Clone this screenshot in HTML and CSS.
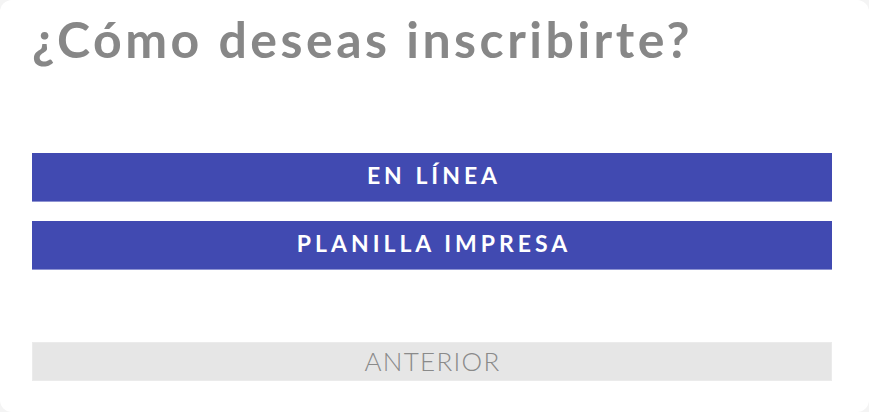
FILE: index.html
```html
<!DOCTYPE html>
<html lang="es">
<head>
<meta charset="utf-8">
<link rel="stylesheet" href="styles.css">
</head>
<body>
<div class="card">
  <h1 class="title">¿Cómo deseas inscribirte?</h1>
  <div class="options">
    <button class="btn primary">EN LÍNEA</button>
    <button class="btn primary">PLANILLA IMPRESA</button>
  </div>
  <button class="btn back">ANTERIOR</button>
</div>
</body>
</html>
```
FILE: styles.css
```css
html, body {
  margin: 0;
  padding: 0;
  background: #f4f4f4;
}
body {
  font-family: Lato, "Open Sans", sans-serif;
}
.card {
  box-sizing: border-box;
  width: 869px;
  height: 412px;
  background: #ffffff;
  border-radius: 12px;
  padding: 7px 37px 0 32px;
  display: flex;
  flex-direction: column;
}
.title {
  margin: 0;
  font-size: 50px;
  line-height: 64px;
  font-weight: 700;
  color: #878787;
  letter-spacing: 3.5px;
}
.options {
  margin-top: 82px;
  display: flex;
  flex-direction: column;
  gap: 19px;
}
.btn {
  display: block;
  width: 800px;
  border: none;
  padding: 0;
  margin: 0;
  font-family: Lato, "Open Sans", sans-serif;
  cursor: pointer;
}
.primary {
  height: 49px;
  background: #414ab1;
  color: #ffffff;
  font-size: 23px;
  font-weight: 700;
  letter-spacing: 4px;
  padding: 0 0 5px 4px;
  box-shadow: inset 0 -1px 0 #8e93d2;
}
.back {
  margin-top: 72px;
  height: 39px;
  background: #e6e6e6;
  color: #8a8a8a;
  font-size: 26px;
  font-weight: 300;
  letter-spacing: 1.3px;
  padding: 0 0 1px 1px;
  border: 1px solid #ebebeb;
}
```
